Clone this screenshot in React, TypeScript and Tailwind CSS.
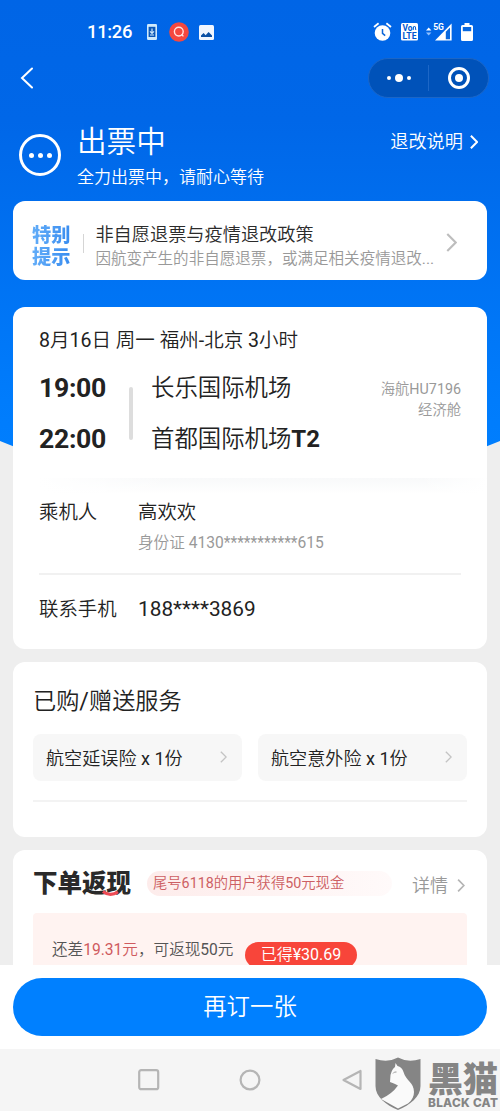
import type { ReactNode } from "react";

function Chevron({ className, width = 2 }: { className?: string; width?: number }) {
  return (
    <svg className={className} viewBox="0 0 10 18" fill="none" stroke="currentColor" strokeWidth={width}>
      <path d="M1 1L9 9L1 17" />
    </svg>
  );
}

function StatusBar() {
  return (
    <div className="flex h-16 items-center justify-between pl-[87px] pr-[27px] text-white">
      <div className="flex items-center">
        <span className="w-[60px] text-[18.4px] font-medium leading-6 tracking-[-0.3px]">11:26</span>
        <svg className="h-4 w-[10px]" viewBox="0 0 10 16">
          <rect width="10" height="16" rx="1.2" fill="#cfeafc" />
          <rect x="1.6" y="2.8" width="6.8" height="10.2" fill="#0b58b8" />
          <path d="M5 4.5V9M3 7.4L5 9.4L7 7.4M3 11H7" stroke="#cfeafc" strokeWidth="1.2" fill="none" />
        </svg>
        <svg className="ml-3 size-5" viewBox="0 0 20 20" fill="none">
          <circle cx="10" cy="10" r="9.8" fill="#f4483f" />
          <circle cx="9.8" cy="9.6" r="4.4" stroke="#ffe4e0" strokeWidth="1.4" />
          <path d="M12.6 12.4L14.4 14.4" stroke="#ffe4e0" strokeWidth="1.4" />
        </svg>
        <svg className="ml-[10px] size-[15px]" viewBox="0 0 15 15">
          <rect width="15" height="15" rx="1.5" fill="#f0f6ff" />
          <path d="M2 12V10.5L4.6 8L6.6 10.2L9.6 7L13 10.5V12Z" fill="#0b50a5" />
        </svg>
      </div>
      <div className="flex items-center">
        <svg className="h-5 w-[19px]" viewBox="0 0 19 20" fill="none" stroke="#fff">
          <circle cx="9.5" cy="11" r="7.8" fill="#fff" stroke="none" />
          <path d="M1 5L5.6 1.2M18 5L13.4 1.2" strokeWidth="1.8" />
          <path d="M9.5 7V11.3L12.2 13.6" stroke="#0b66d8" strokeWidth="1.5" />
        </svg>
        <svg className="ml-[9px] h-[18px] w-[17px]" viewBox="0 0 17 18">
          <rect width="17" height="17.5" rx="1.5" fill="#fff" />
          <text x="1.4" y="8" fontSize="8.4" fontWeight="700" fill="#0058cf" textLength="10" lengthAdjust="spacingAndGlyphs">Vo</text>
          <path d="M12.2 7Q12.2 3 13.4 3T14.8 7" stroke="#0058cf" fill="none" />
          <text x="1.6" y="16" fontSize="8.8" fontWeight="700" fill="#0058cf" textLength="14" lengthAdjust="spacingAndGlyphs">LTE</text>
        </svg>
        <svg className="ml-2 h-5 w-[26px]" viewBox="0 0 26 20">
          <path d="M0 8.5L2.7 5.5L5.4 8.5Z" fill="#fff" />
          <path d="M0 10.5L2.7 13.5L5.4 10.5Z" fill="#8fc0ff" />
          <path d="M9 18.6L25.6 1.5V18.6Z" fill="#fff" />
          <path d="M19.8 9.8L24 5.5V17.2H19.8Z" fill="#0868df" />
          <text x="7.2" y="7.8" fontSize="8.6" fontWeight="700" fill="#fff">5G</text>
        </svg>
        <svg className="ml-[9px] h-[18px] w-3" viewBox="0 0 12 18">
          <path d="M3.5 0H8.5V2H10.5Q12 2 12 3.5V16.5Q12 18 10.5 18H1.5Q0 18 0 16.5V3.5Q0 2 1.5 2H3.5Z" fill="#fff" />
          <rect x="1.8" y="4" width="8.4" height="4.2" fill="#0868df" />
        </svg>
      </div>
    </div>
  );
}

function NavBar() {
  return (
    <div className="flex h-7 items-center justify-between pl-5 pr-[11px]">
      <svg className="h-[22px] w-[13px] text-white" viewBox="0 0 13 22" fill="none" stroke="currentColor" strokeWidth="2" strokeLinecap="round">
        <path d="M12 1.5L2 11L12 20.5" />
      </svg>
      <div className="-my-2 flex h-10 w-[121px] shrink-0 items-center rounded-full border border-[#1c66c6] bg-[#0052b9]">
        <div className="flex flex-1 items-center justify-center gap-[4px]">
          <i className="size-1 rounded-full bg-white" />
          <i className="size-2 rounded-full bg-white" />
          <i className="size-1 rounded-full bg-white" />
        </div>
        <div className="h-[26px] w-px bg-[#1d67c7]" />
        <div className="flex flex-1 items-center justify-center">
          <div className="flex size-[22px] items-center justify-center rounded-full border-[3px] border-white">
            <i className="size-2 rounded-full bg-white" />
          </div>
        </div>
      </div>
    </div>
  );
}

function OrderStatus() {
  return (
    <div className="flex h-[109px] items-start pl-[19px] pr-[22px] pt-[33px] text-white">
      <div className="mt-[9px] flex size-[42px] items-center justify-center gap-1 rounded-full border-[3px] border-white">
        <i className="size-[5px] rounded-full bg-white" />
        <i className="size-[5px] rounded-full bg-white" />
        <i className="size-[5px] rounded-full bg-white" />
      </div>
      <div className="ml-4 flex-1">
        <div className="mt-px text-[29.6px] leading-8">出票中</div>
        <div className="mt-[7px] text-[17px] leading-6">全力出票中，请耐心等待</div>
      </div>
      <div className="mt-[5px] flex items-center gap-[7px] text-[18.2px] leading-6">
        退改说明
        <Chevron className="h-[14px] w-2" width={2.6} />
      </div>
    </div>
  );
}

function Notice() {
  return (
    <div className="mx-[13px] flex h-[79px] items-center rounded-xl bg-white pl-[19px] pr-[30px]">
      <div className="mt-[8px] bg-gradient-to-r from-[#63adf8] to-[#398df0] bg-clip-text font-['Noto_Sans_CJK_SC',sans-serif] text-[19.2px] font-black leading-[22px] text-transparent">
        特别
        <br />
        提示
      </div>
      <div className="ml-[13px] mt-[6px] h-[19px] w-px bg-[#d5d5d5]" />
      <div className="ml-[11px] mt-[13px]">
        <div className="whitespace-nowrap text-[18.2px] leading-6 text-[#2b2b2b]">非自愿退票与疫情退改政策</div>
        <div className="whitespace-nowrap text-[15.55px] leading-6 text-[#999]">因航变产生的非自愿退票，或满足相关疫情退改...</div>
      </div>
      <Chevron className="ml-auto mt-1 h-[19px] w-[11px] text-[#bdbdbd]" />
    </div>
  );
}

function InfoRow({ label, children }: { label: string; children: ReactNode }) {
  return (
    <div className="flex text-[19.4px] leading-7 text-[#222]">
      <div className="w-[99px]">{label}</div>
      <div>{children}</div>
    </div>
  );
}

function Flight() {
  return (
    <div className="mx-[13px] mt-[27px] h-[342px] rounded-xl bg-white px-[26px] pt-5 text-[#222]">
      <div className="text-[19.55px] leading-7">8月16日 周一 福州-北京 3小时</div>
      <div className="mt-[10px] flex h-[101px]">
        <div className="w-[90px] font-['Roboto',sans-serif] text-[26.6px] font-bold leading-[51px] tracking-[-0.3px]">
          <div className="-mt-[3px]">19:00</div>
          <div>22:00</div>
        </div>
        <div className="mt-[22px] h-[53px] w-1 rounded-full bg-[#ddd]" />
        <div className="ml-[18px] text-[23.4px] leading-[51px]">
          <div className="-mt-[2px]">长乐国际机场</div>
          <div>首都国际机场<b className="font-['Roboto',sans-serif] text-[24px]">T2</b></div>
        </div>
        <div className="ml-auto mt-[14px] text-right text-[14.3px] leading-[21px] text-[#999]">
          <div>海航HU7196</div>
          <div>经济舱</div>
        </div>
      </div>
      <div className="-mr-[26px] mt-3 h-4 bg-[linear-gradient(90deg,#fff,transparent_30%,transparent_85%,#fff),linear-gradient(180deg,#f8f9fa,#fff)]" />
      <div className="mt-[5px]">
        <InfoRow label="乘机人">
          高欢欢
          <div className="mt-1 text-[15.6px] leading-6 text-[#999]">身份证 4130***********615</div>
        </InfoRow>
      </div>
      <div className="mb-[21px] mt-[18px] h-[2px] bg-[#f1f1f1]" />
      <InfoRow label="联系手机">
        <span className="block text-[20.8px] leading-[27px]">188****3869</span>
      </InfoRow>
    </div>
  );
}

function Service({ name }: { name: string }) {
  return (
    <div className="flex h-[47px] flex-1 items-center justify-between rounded-lg bg-[#f7f7f7] pl-[13px] pr-[15px] pt-[2px] text-[18.1px] text-[#222]">
      {name}
      <Chevron className="-mt-[3px] h-3 w-[7px] text-[#c4c4c4]" />
    </div>
  );
}

function Services() {
  return (
    <div className="mx-[13px] mt-[13px] h-[175px] rounded-xl bg-white px-5 pt-[23px]">
      <div className="text-[23.2px] leading-8 text-[#222]">已购/赠送服务</div>
      <div className="mt-[17px] flex gap-4">
        <Service name="航空延误险 x 1份" />
        <Service name="航空意外险 x 1份" />
      </div>
      <div className="mt-[19px] h-[2px] bg-[#f3f3f3]" />
    </div>
  );
}

function Cashback() {
  return (
    <div className="mx-[13px] mt-[13px] h-[115px] overflow-hidden rounded-t-xl bg-white px-5 pt-[18px]">
      <div className="flex h-[30px] items-center">
        <div className="relative -mt-[3px] font-['Noto_Sans_CJK_SC',sans-serif] text-[24.5px] font-black leading-[30px] text-[#2a2a2a]">
          下单返现
          <svg className="absolute left-[69px] top-[23px] h-[7px] w-[17px]" viewBox="0 0 17 7" fill="none">
            <path d="M1 1.5Q8 7 16 2" stroke="#ee4b55" strokeWidth="3.2" />
          </svg>
        </div>
        <div className="ml-4 h-[25px] w-[245px] shrink-0 rounded-full bg-gradient-to-r from-[#fdeceb] to-[#fffafa] pl-[6px] text-[14.3px] leading-[25px] text-[#cd5f63]">
          尾号6118的用户获得50元现金
        </div>
        <div className="-ml-4 mt-[5px] flex flex-1 items-center justify-end gap-[9px] whitespace-nowrap pr-[2px] text-[18px] text-[#999]">
          详情
          <Chevron className="h-[13px] w-2 text-[#b5b5b5]" width={2.4} />
        </div>
      </div>
      <div className="mt-[15px] flex h-[60px] rounded-t bg-[#fff3f1] pl-[19px] pt-[25px]">
        <div className="w-[193px] whitespace-nowrap text-[15.6px] leading-6 text-[#555]">
          还差<span className="text-[#cf5a5e]">19.31元</span>，可返现50元
        </div>
        <div className="mt-[4px] h-[26px] w-[112px] rounded-full bg-[#f8453a] text-center text-[16px] leading-[25px] text-white">
          已得¥30.69
        </div>
      </div>
    </div>
  );
}

function SystemNav() {
  return (
    <div className="flex h-[62px] items-center bg-[#f5f5f5]">
      <svg className="ml-[137px] h-6 w-[226px] shrink-0" viewBox="0 0 226 24" fill="none" stroke="#b5b5b5" strokeWidth="2.2" strokeLinejoin="round">
        <rect x="2.2" y="2.2" width="19" height="19" rx="2" />
        <circle cx="113" cy="12" r="9.4" />
        <path d="M206.5 12L223.5 3V21Z" />
      </svg>
      <div className="ml-3 flex shrink-0 items-center self-end">
        <svg className="h-[54px] w-[46px]" viewBox="0 0 46 54">
          <path d="M.5 2Q13 6 23 .5Q33 6 45.5 2V29C45.5 40 35 48 23 53C11 48 .5 40 .5 29Z" fill="#858585" />
          <path d="M20.5 6L22.5 9Q27 10 28.5 15C31 24 39 25 39 35Q39 42 33 46.5L23 51.5L6 42Q17 37 23 28.5Q20 26.5 15 25L15.5 18Q17 12 20 10Z" fill="#fafafa" />
          <path d="M18 16.5Q19 14.5 21.5 15" stroke="#999" strokeWidth="1" fill="none" />
        </svg>
        <div className="ml-[7px] mt-[3px] text-[#858585]">
          <div className="h-[36px] whitespace-nowrap font-['Noto_Sans_CJK_SC',sans-serif] text-[35px] font-black leading-[33px]">黑猫</div>
          <div className="h-[15px] whitespace-nowrap font-['Inter',sans-serif] text-[11.8px] font-extrabold leading-[15px] tracking-[0.3px]">BLACK CAT</div>
        </div>
      </div>
    </div>
  );
}

export default function App() {
  return (
    <div className="grid h-[1111px] w-[500px] overflow-hidden bg-[#eee] font-['Roboto','Noto_Sans_CJK_SC_DemiLight','Noto_Sans_CJK_SC',sans-serif]">
      <div className="h-[470px] bg-[linear-gradient(180deg,#0065e6_0,#0067e8_120px,#007cfc_400px,#007fff)] [clip-path:polygon(0_0,100%_0,100%_441px,97%_447px,50%_470px,3%_447px,0_441px)] [grid-area:1/1]" />
      <div className="z-10 flex flex-col [grid-area:1/1]">
        <StatusBar />
        <NavBar />
        <OrderStatus />
        <Notice />
        <Flight />
        <Services />
        <Cashback />
        <div className="h-[84px] bg-white px-[13px] pt-[13px]">
          <button className="h-[58px] w-full rounded-full bg-[#0080ff] pt-[2px] text-[23.4px] text-white">再订一张</button>
        </div>
        <SystemNav />
      </div>
    </div>
  );
}
